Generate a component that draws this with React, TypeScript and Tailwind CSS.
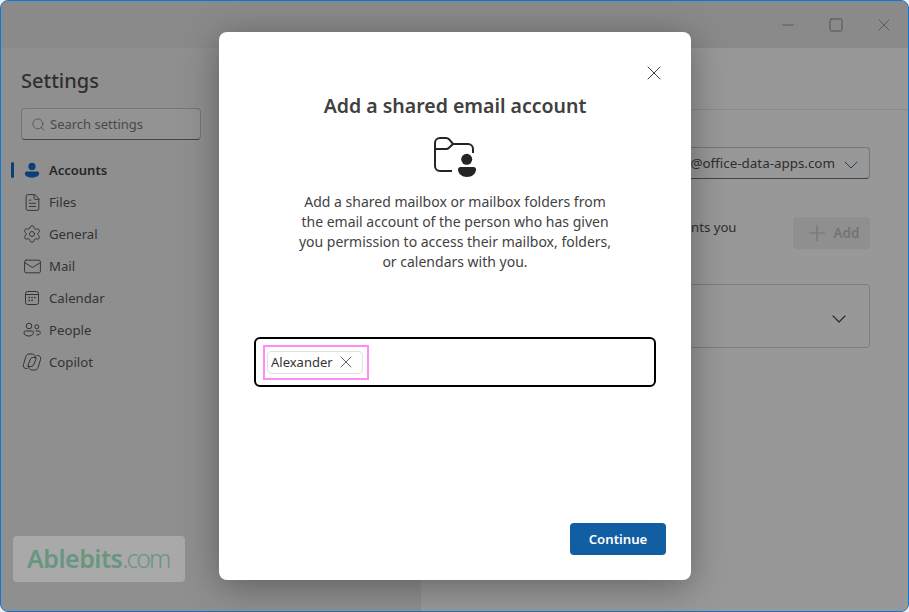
import React from "react";
import { X, Search, ChevronDown, Plus, Minus, Square, FileText, Settings, Mail } from "lucide-react";

const font = "font-['Noto_Sans','Open_Sans',sans-serif]";

function Person({ className }: { className?: string }) {
  return (
    <svg viewBox="0 0 20 20" className={className} fill="currentColor">
      <circle cx="10" cy="5.500" r="4.500" />
      <path d="M3.500 12h13a2.500 2.500 0 0 1 2.500 2.500c0 3-4 5-9 5s-9-2-9-5A2.500 2.500 0 0 1 3.500 12z" />
    </svg>
  );
}

function CalendarIcon() {
  return (
    <svg viewBox="0 0 18 18" className="w-[18px] h-[18px]" fill="none" stroke="currentColor" strokeWidth="1">
      <rect x="2.500" y="2.500" width="13" height="13" rx="2" />
      <path d="M2.500 5.500h13" />
      <g fill="currentColor" stroke="none">
        <rect x="5.500" y="7.800" width="1.500" height="1.500" />
        <rect x="8.300" y="7.800" width="1.500" height="1.500" />
        <rect x="11.100" y="7.800" width="1.500" height="1.500" />
        <rect x="5.500" y="10.700" width="1.500" height="1.500" />
        <rect x="8.300" y="10.700" width="1.500" height="1.500" />
      </g>
    </svg>
  );
}

function PeopleIcon() {
  return (
    <svg viewBox="0 0 18 18" className="w-[18px] h-[18px] overflow-visible" fill="none" stroke="currentColor" strokeWidth="1">
      <circle cx="6" cy="5" r="2.800" />
      <path d="M1 11.500A1.500 1.500 0 0 1 2.500 10h6.500a1.500 1.500 0 0 1 1.500 1.500c0 2.300-2.200 3.500-4.800 3.500S1 13.800 1 11.500z" />
      <circle cx="13.800" cy="5.800" r="2" />
      <path d="M12.500 10h3.500a1.500 1.500 0 0 1 1.300 1.500c0 1.700-1.700 2.700-4 2.500" />
    </svg>
  );
}

function Copilot() {
  return (
    <svg viewBox="0 0 18 18" className="w-[18px] h-[18px] overflow-visible" fill="none" stroke="currentColor" strokeWidth="1">
      <path d="M4.500 15.500H3.200C1.200 15.500-.2 13.600.4 11.700L3 3.300C3.400 2 4.500 1 6 1h3.300c1.300 0 2.300.8 2.700 2l1 3" />
      <path d="M13.500 2.500h1.300c2 0 3.400 1.900 2.800 3.800L15 14.700c-.4 1.300-1.500 2.300-3 2.300H8.700c-1.300 0-2.300-.8-2.700-2l-1-3" />
      <path d="M5 12l2.500-6c.4-1 1.200-1.500 2.200-1.500H13.500" />
      <path d="M13 6l-2.500 6c-.4 1-1.200 1.500-2.200 1.500H4.500" />
    </svg>
  );
}

const iconBox = "w-[18px] h-[18px] flex items-center justify-center shrink-0";

const nav: [string, React.ReactNode][] = [
  ["Files", <FileText key="f" className="w-[19px] h-[19px] shrink-0" strokeWidth={1.2} />],
  ["General", <Settings key="g" className="w-[20px] h-[20px] shrink-0" strokeWidth={1.1} />],
  ["Mail", <Mail key="m" className="w-[19px] h-[19px] shrink-0" strokeWidth={1.2} />],
  ["Calendar", <CalendarIcon key="c" />],
  ["People", <PeopleIcon key="p" />],
  ["Copilot", <Copilot key="o" />],
];

export default function App() {
  return (
    <div className={`relative w-[909px] h-[612px] overflow-hidden bg-[#f0f0f0] ${font}`}>
      <div className="w-full h-full flex flex-col rounded-lg border border-[#0a78d4] overflow-hidden bg-[#929292] text-[#2e2e2e]">
        <div className="h-[47px] shrink-0 bg-[#8a8a8a] flex justify-end items-center text-[#555]">
          <div className="w-12 flex justify-center"><Minus className="w-[18px] h-[18px]" strokeWidth={1.2} /></div>
          <div className="w-12 flex justify-center"><Square className="w-[16px] h-[16px]" strokeWidth={1.5} /></div>
          <div className="w-12 flex justify-center"><X className="w-[20px] h-[20px]" strokeWidth={1.1} /></div>
        </div>
        <div className="flex flex-1 min-h-0">
          <aside className="w-[420px] shrink-0 bg-[#8f8f8f] pt-[19px]">
            <div className="pl-[20px] text-[20px] leading-[28px] font-medium text-[#2f2f2f]">Settings</div>
            <div className="ml-[20px] mt-[13px] w-[180px] h-8 rounded border border-[#757575] border-b-[#444] bg-[#939393] flex items-center pl-[9px] gap-[4px] text-[13px] text-[#4a4a4a]">
              <Search className="w-[15px] h-[15px]" strokeWidth={1.2} />
              <span className="pt-[1px]">Search settings</span>
            </div>
            <div className="mt-[14px] flex flex-col">
              <div className="h-8 flex items-center relative pl-[23px] gap-[8px]">
                <div className="absolute left-[10px] top-[8px] w-[3px] h-4 rounded-sm bg-[#0b3f75]" />
                <Person className="w-[16px] h-[16px] text-[#0b3f75]" />
                <span className="text-[13px] font-semibold text-[#262626] ml-[1px] pt-[1px]">Accounts</span>
              </div>
              {nav.map(([label, icon]) => (
                <div key={label} className="h-8 flex items-center pl-[22px] gap-[8px] text-[13.200px] text-[#333]">
                  <div className={iconBox}>{icon}</div>
                  <span className="pt-[1px]">{label}</span>
                </div>
              ))}
            </div>
          </aside>
          <main className="flex-1 bg-[#989898] flex flex-col">
            <div className="h-[62px] border-b border-[#8a8a8a]" />
            <div className="pr-[38px] mt-[37px] flex justify-end">
              <div className="w-[190px] h-8 rounded border border-[#777] border-b-[#444] flex items-center justify-end gap-[4px] pr-[6px] text-[13.400px] whitespace-nowrap">
                <span>@office-data-apps.com</span>
                <ChevronDown className="w-[24px] h-[24px] text-[#1f3f66] mt-[3px]" strokeWidth={1} />
              </div>
            </div>
            <div className="flex justify-between pr-[38px] mt-[38px] pl-[270px]">
              <span className="text-[13.200px] mt-[1px] whitespace-nowrap">nts you</span>
              <div className="w-[77px] h-8 rounded bg-[#8f8f8f] flex items-center justify-center gap-[4px] text-[#747474] text-[13.500px] font-semibold">
                <Plus className="w-[26px] h-[26px]" strokeWidth={1.1} />Add
              </div>
            </div>
            <div className="mt-[35px] mr-[38px] ml-auto w-[200px] h-16 rounded border border-[#7d7d7d] flex items-center justify-end pr-[18px] pt-[6px]">
              <ChevronDown className="w-[24px] h-[24px] text-[#2a2a2a]" strokeWidth={1.2} />
            </div>
          </main>
        </div>
      </div>

      <div className="absolute left-[13px] top-[536px] w-[172px] h-[46px] rounded bg-[#a9a9a9] flex items-center pl-[14px] text-[#689680] text-[25px] tracking-[-0.5px]">
        <span className="font-semibold">Ablebits</span><span className="font-light tracking-[-2px]">.com</span>
      </div>

      <div className="absolute left-[219px] top-[32px] w-[472px] h-[548px] rounded-lg bg-white shadow-[0_6px_36px_rgba(0,0,0,0.35)] flex flex-col items-center text-[#424242]">
        <X className="absolute right-[25px] top-[29px] w-[24px] h-[24px] text-[#424242]" strokeWidth={1} />
        <h1 className="mt-[60px] text-[19.500px] leading-[28px] font-semibold text-[#404040]">Add a shared email account</h1>
        <svg viewBox="0 0 46 44" className="mt-[15px] w-[46px] h-[44px] text-[#242424]" fill="none" stroke="currentColor" strokeWidth="2">
          <path d="M20 36H8a5 5 0 0 1-5-5V8a5 5 0 0 1 5-5h6a4 4 0 0 1 3 1.200L21 9h15a5 5 0 0 1 5 5v4" />
          <path d="M3 14h11a4 4 0 0 0 3-1.200L21 9" />
          <circle cx="34.700" cy="24.300" r="5.500" fill="currentColor" stroke="none" />
          <path d="M28.500 32h13a2.500 2.500 0 0 1 2.500 2.500c0 4-4 7.500-9 7.500s-9-3.500-9-7.500a2.500 2.500 0 0 1 2.500-2.500z" fill="currentColor" stroke="none" />
        </svg>
        <p className="mt-[13px] w-[320px] text-center text-[14px] leading-[20px]">
          Add a shared mailbox or mailbox folders from the email account of the person who has given you permission to access their mailbox, folders, or calendars with you.
        </p>
        <div className="mt-[65px] w-[402px] h-[50px] rounded-md border-2 border-black flex items-center pl-[7px]">
          <div className="w-[106px] h-[35px] border-2 border-[#ff8cf5] pl-[2px] pt-[4px]">
            <div className="h-[23px] w-[96px] rounded border border-[#e0e0e0] flex items-center justify-between pl-[3px] pr-[6px] text-[13px] text-[#333]">
              <span className="pt-[1px]">Alexander</span>
              <X className="w-[20px] h-[20px] text-[#555]" strokeWidth={1.1} />
            </div>
          </div>
        </div>
        <div className="flex-1" />
        <div className="self-end mr-[25px] mb-[25px] w-[96px] h-8 rounded bg-[#115ea3] text-white flex items-center justify-center text-[13.200px] font-semibold pt-[1px]">Continue</div>
      </div>
    </div>
  );
}
